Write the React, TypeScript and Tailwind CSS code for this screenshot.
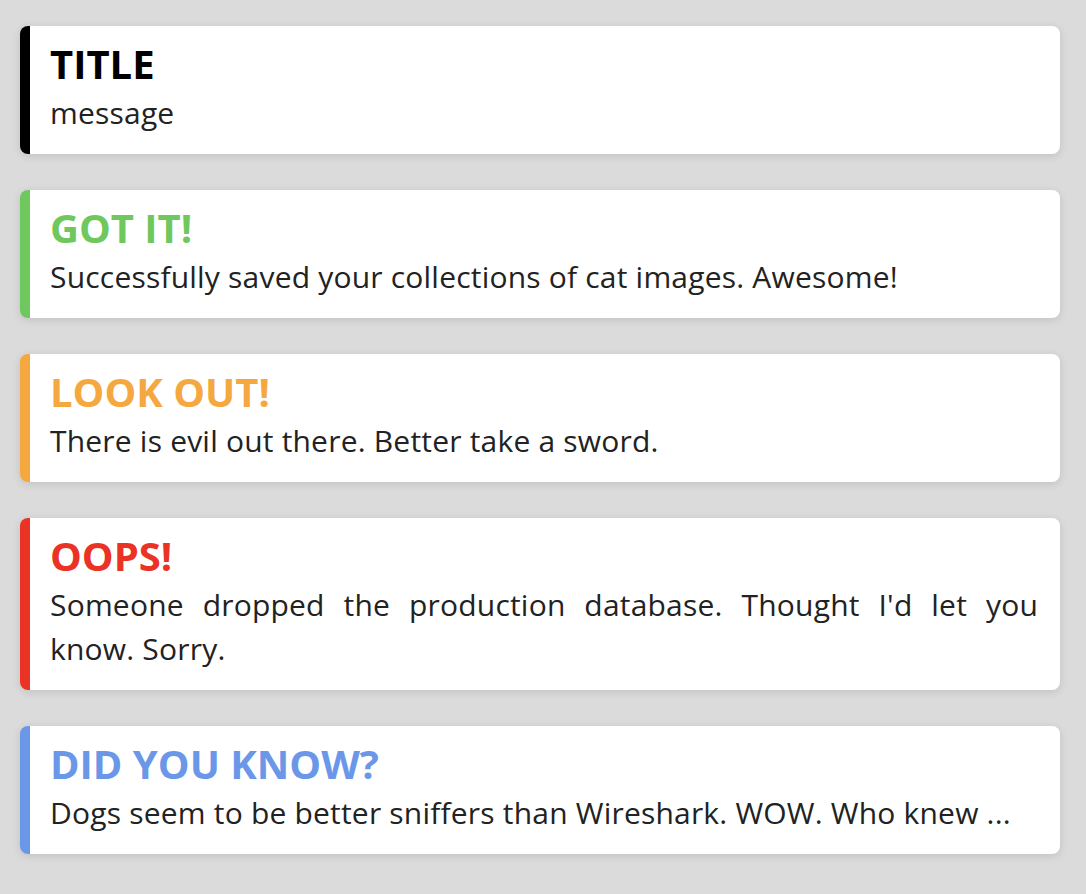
const alerts = [
  { title: "TITLE", message: "message", bar: "border-black", text: "text-black" },
  {
    title: "GOT IT!",
    message: "Successfully saved your collections of cat images. Awesome!",
    bar: "border-[#6ec85d]",
    text: "text-[#6ec85d]",
  },
  {
    title: "LOOK OUT!",
    message: "There is evil out there. Better take a sword.",
    bar: "border-[#f5a840]",
    text: "text-[#f5a840]",
  },
  {
    title: "OOPS!",
    message: "Someone dropped the production database. Thought I'd let you know. Sorry.",
    bar: "border-[#ea3324]",
    text: "text-[#ea3324]",
  },
  {
    title: "DID YOU KNOW?",
    message: "Dogs seem to be better sniffers than Wireshark. WOW. Who knew ...",
    bar: "border-[#6b97e9]",
    text: "text-[#6b97e9]",
  },
];

export default function App() {
  return (
    <div
      className="min-h-screen bg-[#dbdbdb] pl-[20px] pr-[26px] pt-[26px] pb-[40px]"
      style={{ fontFamily: '"Open Sans", "Noto Sans", sans-serif' }}
    >
      <div className="flex flex-col gap-[36px]">
        {alerts.map((a) => (
          <div
            key={a.title}
            className={`rounded-[8px] border-l-[10px] ${a.bar} bg-white pl-[20px] pr-[22px] pt-[10px] pb-[19px] shadow-[0_2px_8px_rgba(0,0,0,0.12)]`}
          >
            <h2 className={`text-[40px] font-bold leading-[55px] ${a.text}`}>{a.title}</h2>
            <p className="text-justify text-[30px] leading-[44px] tracking-[0.2px] text-[#222]">
              {a.message}
            </p>
          </div>
        ))}
      </div>
    </div>
  );
}
